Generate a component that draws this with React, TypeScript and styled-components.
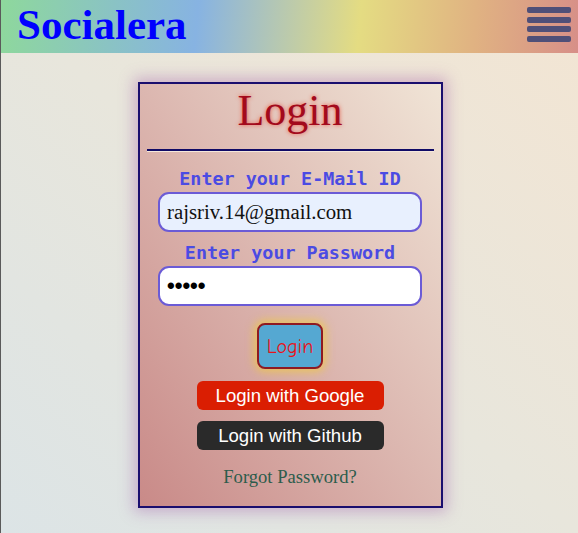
import React from "react";
import styled, { createGlobalStyle } from "styled-components";

const Global = createGlobalStyle`
  html, body { margin: 0; padding: 0; }
  body { font-family: "Liberation Serif", serif; }
`;

const Page = styled.div`
  min-height: 533px;
  border-left: 1px solid #5a5a5a;
  box-sizing: border-box;
  background: linear-gradient(to top right, #dce4e6 0%, #e8e6dc 50%, #f3e5d3 100%);
  display: flex;
  flex-direction: column;
`;

const Header = styled.header`
  height: 53px;
  display: flex;
  align-items: center;
  justify-content: space-between;
  padding: 0 7px 0 16px;
  background: linear-gradient(95deg, #8ed89c 0%, #87b3e2 34%, #e4dc82 62%, #e0b282 82%, #d78f88 100%);
  box-sizing: border-box;
`;

const Brand = styled.h1`
  margin: 0;
  font-family: "Liberation Serif", serif;
  font-weight: bold;
  font-size: 43px;
  color: #0000ff;
  line-height: 1;
  padding-bottom: 4px;
`;

const Burger = styled.div`
  display: flex;
  flex-direction: column;
  gap: 3.5px;
  padding-bottom: 4px;
`;

const Bar = styled.span`
  display: block;
  width: 44px;
  height: 6px;
  border-radius: 2px;
  background: #4f4f78;
`;

const Card = styled.main`
  align-self: center;
  margin: 29px 0 25px 1px;
  width: 305px;
  height: 426px;
  box-sizing: border-box;
  border: 2px solid #1a0e6e;
  background: linear-gradient(to top right, #c98a88 0%, #dcb7b0 50%, #f0e4d6 100%);
  box-shadow: 0 0 14px 4px rgba(150, 70, 160, 0.35);
  display: flex;
  flex-direction: column;
  align-items: center;
`;

const Title = styled.h2`
  margin: 2px 0 0;
  font-family: "Liberation Serif", serif;
  font-weight: normal;
  font-size: 44px;
  line-height: 50px;
  color: #a30a1c;
  text-shadow: 0 0 4px rgba(235, 50, 30, 0.75);
`;

const Rule = styled.hr`
  margin: 13px 0 0;
  width: 287px;
  border: none;
  border-top: 2px solid #100a66;
  border-bottom: 1px solid #f5e8dc;
  height: 0;
`;

const Label = styled.label<{ $top: number }>`
  margin-top: ${(p) => p.$top}px;
  font-family: "DejaVu Sans Mono", "Liberation Mono", monospace;
  font-weight: bold;
  font-size: 18.4px;
  line-height: 22px;
  color: #4b4be3;
`;

const Input = styled.input<{ $filled?: boolean }>`
  margin-top: 2px;
  width: 264px;
  height: 40px;
  box-sizing: border-box;
  border: 2px solid #6b5bd6;
  border-radius: 11px;
  padding: 0 7px;
  background: ${(p) => (p.$filled ? "#e8f0fe" : "#ffffff")};
  font-family: "Liberation Serif", serif;
  font-size: 20.8px;
  color: #111;
  outline: none;
`;

const Dots = styled(Input)`
  font-family: "Liberation Sans", sans-serif;
  font-weight: bold;
  font-size: 22px;
  color: #000;
`;

const LoginBtn = styled.button`
  margin-top: 17px;
  width: 66px;
  height: 46px;
  box-sizing: border-box;
  border: 2px solid #8e1a22;
  border-radius: 8px;
  background: #55a8d2;
  color: #e8141a;
  font-family: "Comic Sans MS", "Comic Neue", cursive;
  font-size: 20px;
  box-shadow: 0 0 8px 3px rgba(238, 200, 70, 0.75);
  padding: 0;
`;

const Social = styled.button<{ $bg: string; $top: number }>`
  margin-top: ${(p) => p.$top}px;
  width: 187px;
  height: 29px;
  border: none;
  border-radius: 6px;
  background: ${(p) => p.$bg};
  color: #ffffff;
  font-family: "Liberation Sans", Arial, sans-serif;
  font-size: 18.6px;
  padding: 0;
`;

const Forgot = styled.a`
  margin-top: 16px;
  font-family: "Liberation Serif", serif;
  font-size: 18.6px;
  line-height: 22px;
  color: #2c5c4c;
  text-decoration: none;
`;

export default function App() {
  return (
    <>
      <Global />
      <Page>
        <Header>
          <Brand>Socialera</Brand>
          <Burger>
            <Bar />
            <Bar />
            <Bar />
            <Bar />
          </Burger>
        </Header>
        <Card>
          <Title>Login</Title>
          <Rule />
          <Label $top={16}>Enter your E-Mail ID</Label>
          <Input $filled defaultValue="rajsriv.14@gmail.com" />
          <Label $top={10}>Enter your Password</Label>
          <Dots defaultValue="•••••" />
          <LoginBtn>Login</LoginBtn>
          <Social $bg="#da1e02" $top={12}>Login with Google</Social>
          <Social $bg="#2a2a2a" $top={11}>Login with Github</Social>
          <Forgot>Forgot Password?</Forgot>
        </Card>
      </Page>
    </>
  );
}
